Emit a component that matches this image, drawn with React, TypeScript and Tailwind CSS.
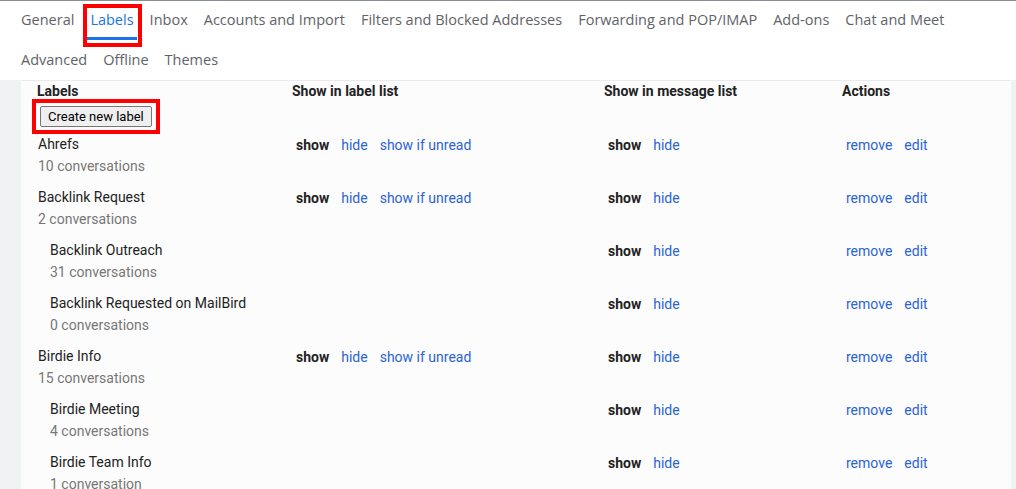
import {FC} from "react";

const tabsRow = [
  "General",
  "Labels",
  "Inbox",
  "Accounts and Import",
  "Filters and Blocked Addresses",
  "Forwarding and POP/IMAP",
  "Add-ons",
  "Chat and Meet",
  "Advanced",
  "Offline",
  "Themes",
];

type Label = { name: string; count: string; nested?: boolean; inList?: boolean };

const labels: Label[] = [
  { name: "Ahrefs", count: "10 conversations", inList: true },
  { name: "Backlink Request", count: "2 conversations", inList: true },
  { name: "Backlink Outreach", count: "31 conversations", nested: true },
  { name: "Backlink Requested on MailBird", count: "0 conversations", nested: true },
  { name: "Birdie Info", count: "15 conversations", inList: true },
  { name: "Birdie Meeting", count: "4 conversations", nested: true },
  { name: "Birdie Team Info", count: "1 conversation", nested: true },
];

const link = "text-[#2b63d6] cursor-pointer";

const App: FC = () => {
  return (
    <div
      className="w-[1016px] h-[489px] overflow-hidden bg-[#f1f2f4] text-[14px]"
      style={{ fontFamily: "Roboto, 'Liberation Sans', sans-serif" }}
    >
      {/* tabs */}
      <div className="bg-white border-t border-[#8a8f96] h-[80px]">
        <div
          className="flex flex-wrap gap-x-4 px-[21px] -mt-px text-[14.5px] text-[#5f6368]"
          style={{ fontFamily: "'Open Sans', Roboto, sans-serif" }}
        >
          {tabsRow.map((t) =>
            t === "Labels" ? (
              <div key={t} className="relative h-10 flex items-center text-[#1a73e8]">
                <span>{t}</span>
                <span className="absolute left-[-4px] right-[-3px] bottom-0 h-[3px] bg-[#1a73e8]" />
                <span className="absolute left-[-7px] right-[-8px] top-[4px] bottom-[-7px] border-4 border-[#ff0000]" />
              </div>
            ) : (
              <div key={t} className="h-10 flex items-center">
                {t}
              </div>
            )
          )}
        </div>
      </div>

      {/* labels panel */}
      <div className="ml-[21px] w-[990px] h-[409px] bg-[#fcfcfc] border-t border-[#e8eaed] pl-4 text-[#222]">
        <div className="flex font-bold leading-5 h-[18px]">
          <div className="w-[255px]">Labels</div>
          <div className="w-[312px]">Show in label list</div>
          <div className="w-[238px]">Show in message list</div>
          <div>Actions</div>
        </div>
        <div className="h-[35px] flex items-start">
          <div className="border-4 border-[#ff0000] px-1 pt-[3px] pb-[3px] -ml-[5px]">
            <button
              className="h-[21px] px-[7px] bg-[#efefef] border border-[#767676] rounded-[2px] text-[13px] text-black leading-none"
              style={{ fontFamily: "Roboto, sans-serif" }}
            >
              Create new label
            </button>
          </div>
        </div>
        {labels.map((l) => (
          <div key={l.name} className="flex h-[53px]">
            <div className={`w-[255px] ${l.nested ? "pl-[13px]" : "pl-px"}`}>
              <div className="leading-5 text-[#222]">{l.name}</div>
              <div className="leading-5 mt-[2px] text-[#777]">{l.count}</div>
            </div>
            <div className="w-[312px] pl-1 leading-5 pt-px">
              {l.inList && (
                <div className="flex gap-3">
                  <span className="font-bold">show</span>
                  <span className={link}>hide</span>
                  <span className={link}>show if unread</span>
                </div>
              )}
            </div>
            <div className="w-[238px] pl-1 leading-5 pt-px flex gap-3 items-start">
              <span className="font-bold">show</span>
              <span className={link}>hide</span>
            </div>
            <div className="pl-1 leading-5 pt-px flex gap-3 items-start">
              <span className={link}>remove</span>
              <span className={link}>edit</span>
            </div>
          </div>
        ))}
      </div>
    </div>
  );
};

export default App;
